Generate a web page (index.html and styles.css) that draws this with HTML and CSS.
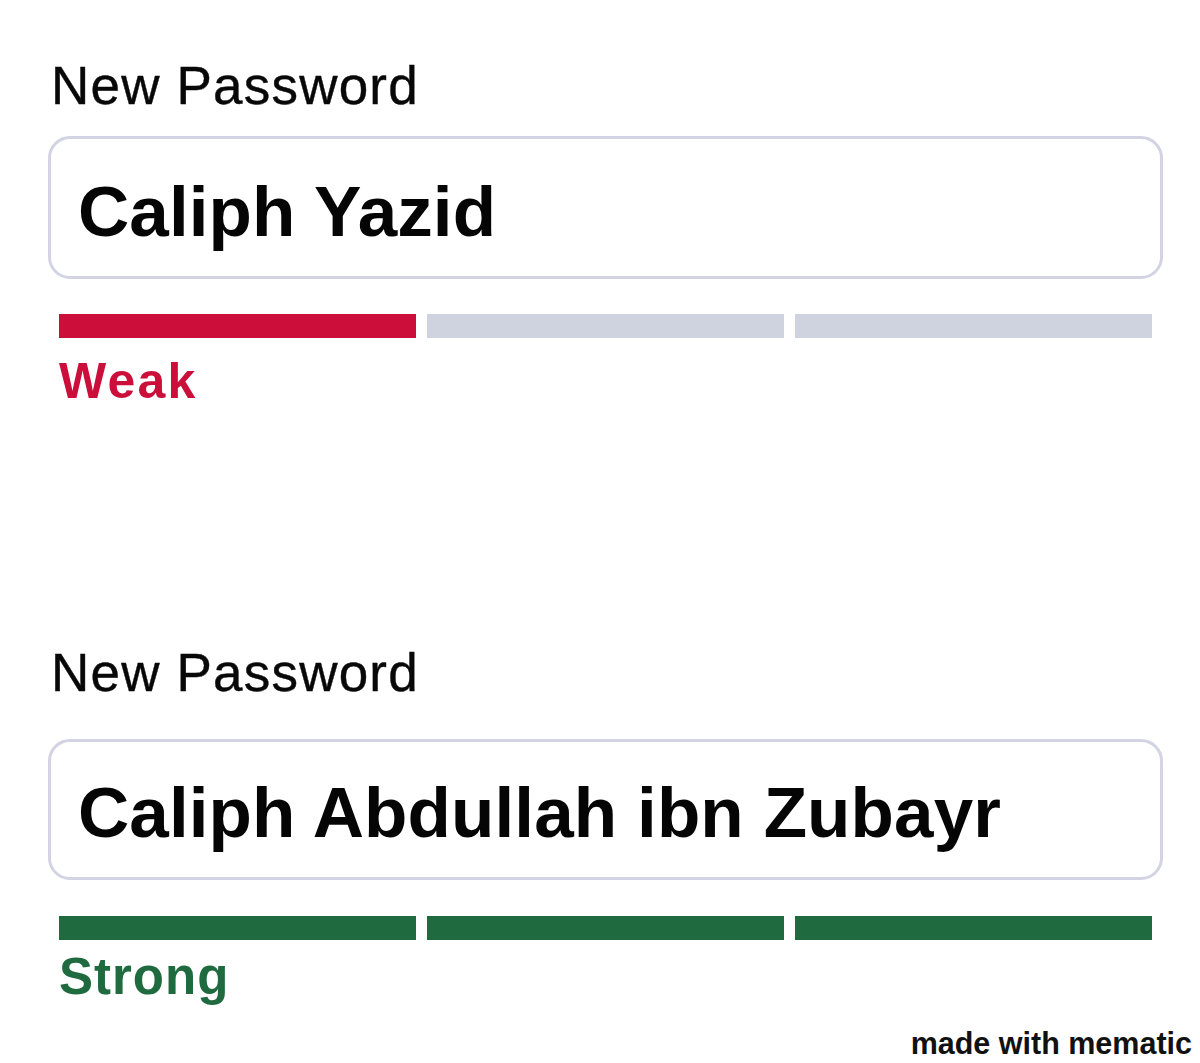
FILE: index.html
```html
<!DOCTYPE html>
<html lang="en">
<head>
<meta charset="utf-8">
<title>New Password</title>
<link rel="stylesheet" href="styles.css">
</head>
<body>
<main class="page">
  <section class="field field-weak">
    <div class="label">New Password</div>
    <div class="input"><span class="value">Caliph Yazid</span></div>
    <div class="meter">
      <span class="seg seg-weak"></span>
      <span class="seg"></span>
      <span class="seg"></span>
    </div>
    <div class="strength strength-weak">Weak</div>
  </section>
  <section class="field field-strong">
    <div class="label">New Password</div>
    <div class="input"><span class="value">Caliph Abdullah ibn Zubayr</span></div>
    <div class="meter">
      <span class="seg seg-strong"></span>
      <span class="seg seg-strong"></span>
      <span class="seg seg-strong"></span>
    </div>
    <div class="strength strength-strong">Strong</div>
  </section>
  <footer class="watermark">made with mematic</footer>
</main>
</body>
</html>
```

FILE: styles.css
```css
html, body {
  margin: 0;
  padding: 0;
  background: #ffffff;
}
body {
  width: 1200px;
  height: 1063px;
  overflow: hidden;
  font-family: "Liberation Sans", Arial, Helvetica, sans-serif;
  color: #0d0d0d;
}
.page {
  display: flex;
  flex-direction: column;
  padding: 56px 37px 0 48px;
}
.field {
  display: flex;
  flex-direction: column;
}
.label {
  font-size: 53px;
  line-height: 60px;
  font-weight: 400;
  padding-left: 3px;
  letter-spacing: 1.2px;
  color: #080808;
  -webkit-text-stroke: 0.4px #080808;
}
.input {
  border: 3px solid #d3d3e3;
  border-radius: 22px;
  padding: 33px 24px 24px 27px;
  margin-top: 20px;
  background: #fff;
}
.value {
  display: block;
  font-size: 71px;
  line-height: 80px;
  font-weight: 700;
  color: #050505;
  white-space: nowrap;
  letter-spacing: 0.1px;
}
.meter {
  display: flex;
  gap: 10.5px;
  margin: 35px 11px 0 11px;
}
.seg {
  flex: 1;
  height: 24px;
  background: #cfd2df;
}
.seg-weak {
  background: #cc0f3a;
}
.seg-strong {
  background: #1f6b3f;
}
.strength {
  font-weight: 700;
  line-height: 58px;
  padding-left: 11px;
}
.strength-weak {
  font-size: 50px;
  color: #cc0f3a;
  margin-top: 14px;
  letter-spacing: 2.2px;
}
.strength-strong {
  font-size: 51px;
  color: #1f6b3f;
  margin-top: 8px;
  letter-spacing: 1px;
}
.field-strong {
  margin-top: 233px;
}
.field-strong .input {
  margin-top: 36px;
  padding-top: 31px;
}
.field-strong .meter {
  margin-top: 36px;
}
.watermark {
  align-self: flex-end;
  margin-right: -29px;
  margin-top: 20px;
  font-size: 30.5px;
  line-height: 34px;
  font-weight: 700;
  color: #111;
}
```
